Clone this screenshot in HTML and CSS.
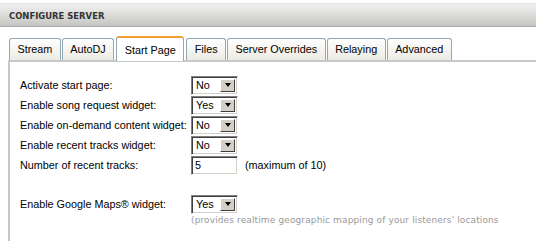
FILE: index.html
```html
<!DOCTYPE html>
<html>
<head>
<meta charset="utf-8">
<link rel="stylesheet" href="styles.css">
</head>
<body>
<div class="header"><span class="title">CONFIGURE SERVER</span></div>
<div class="tabs">
  <div class="tab">Stream</div>
  <div class="tab">AutoDJ</div>
  <div class="tab active">Start Page</div>
  <div class="tab">Files</div>
  <div class="tab">Server Overrides</div>
  <div class="tab">Relaying</div>
  <div class="tab">Advanced</div>
</div>
<div class="panel">
  <div class="row"><span class="label">Activate start page:</span><span class="sel"><span class="val">No</span><span class="btn"><span class="tri"></span></span></span></div>
  <div class="row"><span class="label">Enable song request widget:</span><span class="sel"><span class="val">Yes</span><span class="btn"><span class="tri"></span></span></span></div>
  <div class="row"><span class="label">Enable on-demand content widget:</span><span class="sel"><span class="val">No</span><span class="btn"><span class="tri"></span></span></span></div>
  <div class="row"><span class="label">Enable recent tracks widget:</span><span class="sel"><span class="val">No</span><span class="btn"><span class="tri"></span></span></span></div>
  <div class="row"><span class="label">Number of recent tracks:</span><span class="inp">5</span><span class="hint">(maximum of 10)</span></div>
  <div class="row gap"><span class="label">Enable Google Maps® widget:</span><span class="sel"><span class="val">Yes</span><span class="btn"><span class="tri"></span></span></span></div>
  <div class="note">(provides realtime geographic mapping of your listeners' locations</div>
</div>
</body>
</html>
```
FILE: styles.css
```css
html, body { margin: 0; padding: 0; background: #fff; }
body { width: 536px; height: 241px; overflow: hidden; font-family: "Liberation Sans", Arial, sans-serif; font-size: 10.8px; color: #000; }
.header {
  margin-top: 3px;
  height: 22px;
  border-top: 1px solid #e4e4e4;
  border-bottom: 1px solid #a8a8a4;
  background: linear-gradient(#efefed, #dcdcda 50%, #c4c4c0);
  display: flex; align-items: center;
  padding-left: 9px;
}
.title { font-family: "DejaVu Sans Condensed", "DejaVu Sans", sans-serif; font-weight: bold; font-size: 9.4px; color: #333; }
.tabs { display: flex; margin-top: 9px; padding-left: 9px; height: 24px; align-items: flex-end; position: relative; z-index: 1; }
.tab {
  height: 22px; box-sizing: border-box;
  border: 1px solid #91a7b4; border-bottom: none;
  border-radius: 3px 3px 0 0;
  background: linear-gradient(#fefefe, #f4f3ee 60%, #ecebe6);
  padding: 0 7.5px 1px; margin-right: 1px;
  display: flex; align-items: center;
}
.tab.active {
  height: 25px; background: #fff; border-top: 2px solid #f0a030;
  margin-bottom: -1px; padding: 0 7.5px; margin-right: 2px; margin-left: 1px;
}
.panel {
  margin-left: 8px;
  border-top: 2px solid #c8c8c8;
  border-left: 2px solid #c8c8c8;
  padding: 13px 0 0 10px;
  height: 170px;
}
.row { display: flex; align-items: center; height: 20px; }
.row.gap { margin-top: 19px; }
.label { width: 171px; }
.sel {
  width: 47px; height: 19px; box-sizing: border-box;
  border-top: 1px solid #808080; border-left: 1px solid #808080;
  border-right: 1px solid #fff; border-bottom: 1px solid #fff;
  display: flex; background: #fff;
  box-shadow: inset 1px 1px 0 #404040, inset -1px -1px 0 #d4d0c8;
}
.val { flex: 1; padding-left: 4px; display: flex; align-items: center; }
.btn {
  width: 15px; margin: 2px 2px 2px 0; box-sizing: border-box; background: #d4d0c8;
  border-top: 1px solid #fff; border-left: 1px solid #fff; border-right: 1px solid #404040; border-bottom: 1px solid #404040;
  display: flex; align-items: center; justify-content: center;
}
.tri { width: 0; height: 0; border-left: 3.5px solid transparent; border-right: 3.5px solid transparent; border-top: 4px solid #000; }
.inp {
  width: 47px; height: 19px; box-sizing: border-box;
  border-top: 1px solid #808080; border-left: 1px solid #808080;
  border-right: 1px solid #fff; border-bottom: 1px solid #fff;
  box-shadow: inset 1px 1px 0 #404040, inset -1px -1px 0 #d4d0c8;
  padding-left: 3px; display: flex; align-items: center;
}
.hint { margin-left: 7px; }
.note { margin-left: 171px; margin-top: 1px; color: #999; font-family: "DejaVu Sans", sans-serif; font-size: 9px; letter-spacing: 0.12px; }
```
